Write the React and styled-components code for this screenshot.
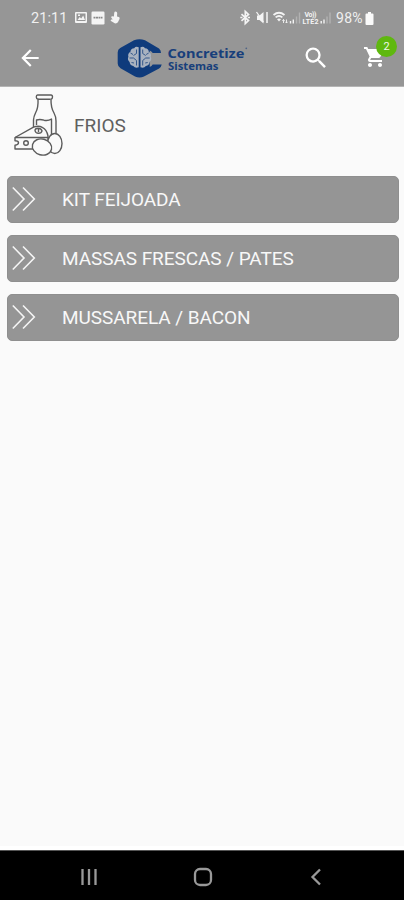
import React from "react"
import styled, { createGlobalStyle } from "styled-components"
import { MdArrowBack, MdSearch, MdShoppingCart } from "react-icons/md"

const categories = ["KIT FEIJOADA", "MASSAS FRESCAS / PATES", "MUSSARELA / BACON"]

export default function App() {
  return (
    <>
      <GlobalStyle />
      <Screen>
        <Header>
          <StatusBar>
            <Clock>21:11</Clock>
            <Notifications />
            <Signals />
            <Battery>98%</Battery>
            <BatteryIcon />
          </StatusBar>
          <Toolbar>
            <BackButton aria-label="Voltar">
              <MdArrowBack />
            </BackButton>
            <Logo />
            <SearchButton aria-label="Buscar">
              <MdSearch />
            </SearchButton>
            <CartButton aria-label="Carrinho">
              <MdShoppingCart />
              <Badge>2</Badge>
            </CartButton>
          </Toolbar>
        </Header>
        <Main>
          <Title>
            <DairyIcon />
            <h1>FRIOS</h1>
          </Title>
          <List>
            {categories.map(name => (
              <Category key={name}>
                <Chevrons />
                <span>{name}</span>
              </Category>
            ))}
          </List>
        </Main>
        <AndroidNav />
      </Screen>
    </>
  )
}

function Notifications() {
  return (
    <svg width="48" height="16" viewBox="73 10 48 16" fill="#f4f4f4">
      <path
        fillRule="evenodd"
        d="M76 12h10q1 0 1 1v9q0 1-1 1H76q-1 0-1-1v-9q0-1 1-1zM76.5 13.5v7.5h9v-7.5z"
      />
      <path d="M77.5 20l2.2-3 1.5 1.5 2-3 1.8 4.5zM78 14.5h2v1.5h-2z" />
      <rect x="91.5" y="11.500" width="13" height="13" rx="1.2" />
      <path d="M93.5 17.6h9" stroke="#8a8a8a" strokeWidth="1.6" strokeDasharray="2 .5" />
      <path d="M115.6 11.500q1.500 0 1.600 1.600l-.2 3.400 1.900.6q1.200.6.6 1.800l-1.600 3.400q-1.200 1.600-3.200 1l-3.700-2.300q-1-1 .4-1.600l1.300.1-1.500-2q-.1-1.200 1.100-1.200l1.600.1.300-3.500q.2-1.400 1.400-1.400z" />
    </svg>
  )
}

function Signals() {
  return (
    <Signal width="94" height="18" viewBox="239 9 94 18" fill="none" stroke="#f4f4f4">
      <path d="M241.5 14.2l7 6.400-3.200 3V11.400l3.200 3-7 6.400" strokeWidth="1.7" />
      <path d="M240.300 17.500h2.200M247.800 17.500h2.200" strokeWidth="1.7" />
      <path d="M257 15.500h2.500l4-3.500v11.500l-4-3.500H257z" fill="#f4f4f4" stroke="none" />
      <path d="M256.500 12l7 10" strokeWidth="1.3" />
      <path d="M267 12v11" strokeWidth="1.5" />
      <path d="M273.500 15q5.500-4.400 11 0M275.600 17.400q3.400-2.700 6.800 0" strokeWidth="1.8" />
      <path d="M277 19.200q2-1.500 4 0l-2 2.300z" fill="#f4f4f4" stroke="none" />
      <path d="M283.500 23v-3.500m-1.200 1.200l1.200-1.200 1.200 1.200M286.500 19.500V23m-1.200-1.200l1.200 1.200 1.200-1.200" strokeWidth=".9" />
      <path d="M290.500 23.500v-2.500M293.300 23.500v-4" strokeWidth="1.400" />
      <path d="M296.500 23.500v-7M299.500 23.500v-11" strokeWidth="1.400" stroke="#b2b2b2" />
      <g fill="#f4f4f4" stroke="none" fontFamily="Roboto, sans-serif" fontWeight="700" fontSize="7">
        <text x="304.500" y="16.800" textLength="12">Vo))</text>
        <text x="302.500" y="23.500" textLength="16">LTE2</text>
      </g>
      <path d="M321.200 23.500V21M324 23.500v-4" strokeWidth="1.400" />
      <path d="M327 23.500v-7M330 23.500v-11" strokeWidth="1.400" stroke="#b2b2b2" />
    </Signal>
  )
}

function BatteryIcon() {
  return (
    <svg width="9" height="13" viewBox="0 0 9 13" fill="#fafafa">
      <path d="M3 0h3v1.500h1.500q1 0 1 1V12q0 1-1 1h-6q-1 0-1-1V2.500q0-1 1-1H3z" />
    </svg>
  )
}

function Logo() {
  return (
    <LogoSvg width="132" height="42" viewBox="116 36 132 42">
      <path
        fill="#0f3b7c"
        d="M134 39.200q5.500-2 11 0l14 8.300q2 1.600 2 4.500h-8.300q-1.200-1.600-3-2.500v16.400q2-.7 3-2.500h9q-.5 2.700-2.600 4.200L144 75.500q-4.500 2-9 0L120.500 67.300q-2.800-1.700-2.800-4.800V51.200q0-2.800 2.500-4.200z"
      />
      <g fill="#a9b2c0">
        <path d="M138.700 46.300q-3-1.300-4.500 1-3.500.2-3.800 3.500-3 1.800-2 5-1.400 3 1.200 5.300.3 3.600 3.700 4 2 2.500 5.400 1.200z" />
        <path d="M140.500 46.300q3-1.300 4.500 1 3.500.2 3.800 3.500 3 1.800 2 5 1.400 3-1.200 5.300-.3 3.600-3.700 4-2 2.500-5.400 1.200z" />
      </g>
      <path
        d="M136.500 48.500v4l-3 2M130.500 52l2.500 1.500M129.500 57h4l3 2.500v5M131.500 61.500l2.500.5M142.700 48.500v4l3 2M148.700 52l-2.500 1.500M149.700 57h-4l-3 2.500v5M147.700 61.500l-2.500.5"
        stroke="#284e86"
        fill="none"
        strokeWidth=".9"
      />
      <g fill="#183f7b" fontFamily="'Noto Sans', 'Open Sans', sans-serif" fontWeight="700">
        <text x="167.500" y="57.200" fontSize="13" textLength="77" lengthAdjust="spacingAndGlyphs">Concretize</text>
        <text x="168" y="68.800" fontSize="10" textLength="50.500" lengthAdjust="spacingAndGlyphs">Sistemas</text>
      </g>
      <circle cx="246.300" cy="47.300" r=".9" fill="#506587" />
    </LogoSvg>
  )
}

function DairyIcon() {
  return (
    <svg width="52" height="64" viewBox="12 93 52 64" fill="#fafafa" stroke="#5c5c5c" strokeWidth="1.4" strokeLinejoin="round">
      <path d="M37.500 95h13.500q1.500 0 1.500 2t-1.500 2.200q-.2 8.300 3 13.800 2 3.500 2 8v17H33.500V120q.2-3.500 2-7 3-5.500 2.500-13.800-1.700-.2-1.700-2.200t1.200-2z" />
      <path d="M38 99.200h12.500M36.500 125v-5q3.500-1 7.500.2 4 1 7.500-1.200V136" fill="none" />
      <path d="M15 137.500l18.500-10.300q5-2 8.800.2 4.500 2.200 5.700 8.600v13H15v-3.800q3.500-.5 3.500-2.500t-3.500-2z" />
      <path d="M15 137.500h33" fill="none" />
      <circle cx="26" cy="143" r="2.300" />
      <path d="M35 130.500q0-2.200 3-2.200t4 2.500q-.5 2.500-3.500 2.500t-3.500-2.800zM38.500 129v3" />
      <ellipse cx="54.800" cy="143.500" rx="7.200" ry="10" />
      <ellipse cx="42" cy="147" rx="9.800" ry="8" transform="rotate(15 42 147)" />
    </svg>
  )
}

function Chevrons() {
  return (
    <svg width="25" height="26" viewBox="0 0 25 26" fill="none" stroke="#f5f5f5" strokeWidth="1.6">
      <path d="M.8 1.500L12 13 .8 24.500M11 1.500L22.300 13 11 24.500" />
    </svg>
  )
}

function AndroidNav() {
  return (
    <NavBar>
      <svg width="18" height="18" viewBox="0 0 18 18">
        <path d="M2.500 1v16M9 1v16M15.500 1v16" />
      </svg>
      <svg width="20" height="20" viewBox="0 0 20 20">
        <rect x="2" y="2" width="16" height="16" rx="5" />
      </svg>
      <svg width="12" height="18" viewBox="0 0 12 18">
        <path d="M10 1.500L2.500 9l7.500 7.500" />
      </svg>
    </NavBar>
  )
}

const GlobalStyle = createGlobalStyle`
  * {
    box-sizing: border-box;
  }
  body {
    margin: 0;
    background: #fafafa;
    font-family: Roboto, sans-serif;
  }
  svg {
    display: block;
    flex-shrink: 0;
  }
`
const Screen = styled.div`
  height: 900px;
  display: flex;
  flex-direction: column;
`
const Header = styled.header`
  height: 87px;
  background: #969696;
  border-bottom: 1px solid #b4b4b4;
  color: #fff;
`
const StatusBar = styled.div`
  height: 36px;
  display: flex;
  align-items: center;
  padding: 0 30px 0 31px;
  font-size: 14.5px;
  color: #f0f0f0;
`
const Clock = styled.span`
  width: 42px;
  letter-spacing: 0.1px;
`
const Signal = styled.svg`
  margin-left: auto;
`
const Battery = styled.span`
  width: 29px;
  margin-left: 3px;
  font-size: 14px;
  letter-spacing: 0.3px;
`
const Toolbar = styled.div`
  height: 44px;
  display: flex;
  align-items: center;
  padding: 0 17px;
`
const IconButton = styled.button`
  display: flex;
  padding: 0;
  border: none;
  background: none;
  color: #fff;
`
const BackButton = styled(IconButton)`
  font-size: 26px;
`
const LogoSvg = styled.svg`
  margin-left: 73px;
`
const SearchButton = styled(IconButton)`
  margin-left: auto;
  font-size: 28px;
`
const CartButton = styled(IconButton)`
  position: relative;
  margin-left: 33px;
  margin-top: -2px;
  font-size: 24px;
`
const Badge = styled.span`
  position: absolute;
  top: -9px;
  right: -10px;
  width: 21px;
  height: 21px;
  border-radius: 50%;
  background: #5fb80f;
  color: #f0f8e8;
  font-family: Roboto, sans-serif;
  font-size: 11px;
  line-height: 21px;
  text-align: center;
`
const Main = styled.main`
  flex: 1;
  border-bottom: 4px solid #fff;
`
const Title = styled.div`
  height: 88.5px;
  display: flex;
  align-items: flex-start;
  padding: 6px 12px;
  h1 {
    margin: 21px 0 0 10px;
    font-size: 19px;
    line-height: 24px;
    font-weight: 400;
    color: #606060;
  }
`
const List = styled.ul`
  display: grid;
  gap: 12px;
  margin: 0;
  padding: 0 5px 0 7px;
  list-style: none;
`
const Category = styled.li`
  height: 47px;
  display: flex;
  align-items: center;
  gap: 25px;
  padding-left: 4px;
  border: 1px solid #8f8f8f;
  border-radius: 5px;
  background: #959595;
  color: #f8f8f8;
  font-size: 19px;
  letter-spacing: -0.06px;
`
const NavBar = styled.nav`
  height: 50px;
  display: flex;
  align-items: center;
  justify-content: space-between;
  padding: 2px 82px 0 80px;
  border-top: 1px solid #555;
  background: #000;
  svg {
    fill: none;
    stroke: #999;
    stroke-width: 2.3;
  }
  svg:nth-child(2) {
    margin-right: 3px;
  }
`
